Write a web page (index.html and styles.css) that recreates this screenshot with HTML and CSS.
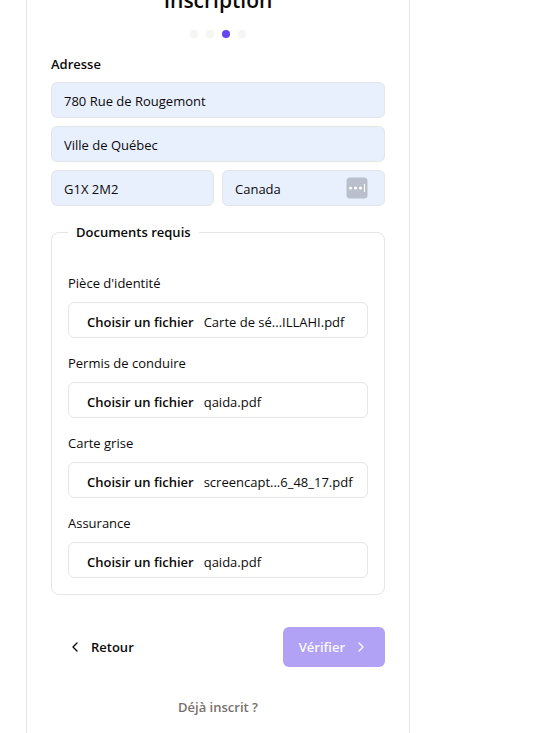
FILE: index.html
```html
<!DOCTYPE html>
<html lang="fr">
<head>
<meta charset="utf-8">
<meta name="viewport" content="width=device-width, initial-scale=1">
<title>Inscription</title>
<link rel="stylesheet" href="styles.css">
</head>
<body>
<main class="card">
  <h1 class="title">Inscription</h1>
  <ol class="steps">
    <li class="step"></li>
    <li class="step"></li>
    <li class="step step-current"></li>
    <li class="step"></li>
  </ol>
  <form class="form">
    <div class="address">
      <label class="label label-strong" for="street">Adresse</label>
      <input class="input" id="street" type="text" value="780 Rue de Rougemont">
      <input class="input" type="text" aria-label="Ville" value="Ville de Québec">
      <div class="row">
        <input class="input" type="text" aria-label="Code postal" value="G1X 2M2">
        <div class="with-badge">
          <input class="input" type="text" aria-label="Pays" value="Canada">
          <svg class="badge" viewBox="0 0 22 22" aria-hidden="true">
            <rect x="0.5" y="0.5" width="21" height="21" rx="3.5" fill="#b9c0cb"/>
            <circle cx="4.5" cy="11" r="1.5" fill="#fff"/>
            <circle cx="9.5" cy="11" r="1.5" fill="#fff"/>
            <circle cx="14.5" cy="11" r="1.5" fill="#fff"/>
            <rect x="18" y="7" width="1" height="8" fill="#fff"/>
          </svg>
        </div>
      </div>
    </div>
    <fieldset class="documents">
      <legend class="legend">Documents requis</legend>
      <div class="field">
        <label class="label" for="identity">Pièce d'identité</label>
        <label class="file"><input class="file-input" id="identity" type="file"><span class="file-button">Choisir un fichier</span><span class="file-name">Carte de sé...ILLAHI.pdf</span></label>
      </div>
      <div class="field">
        <label class="label" for="licence">Permis de conduire</label>
        <label class="file"><input class="file-input" id="licence" type="file"><span class="file-button">Choisir un fichier</span><span class="file-name">qaida.pdf</span></label>
      </div>
      <div class="field">
        <label class="label" for="registration">Carte grise</label>
        <label class="file"><input class="file-input" id="registration" type="file"><span class="file-button">Choisir un fichier</span><span class="file-name">screencapt...6_48_17.pdf</span></label>
      </div>
      <div class="field">
        <label class="label" for="insurance">Assurance</label>
        <label class="file"><input class="file-input" id="insurance" type="file"><span class="file-button">Choisir un fichier</span><span class="file-name">qaida.pdf</span></label>
      </div>
    </fieldset>
    <div class="actions">
      <button class="button button-ghost" type="button"><svg class="icon" viewBox="0 0 24 24" aria-hidden="true"><path d="m15 18-6-6 6-6"/></svg>Retour</button>
      <button class="button button-primary" type="submit" disabled>Vérifier<svg class="icon" viewBox="0 0 24 24" aria-hidden="true"><path d="m9 18 6-6-6-6"/></svg></button>
    </div>
  </form>
  <a class="login" href="#">Déjà inscrit ?</a>
</main>
</body>
</html>
```
FILE: styles.css
```css
*, *::before, *::after { box-sizing: border-box; }

body {
  margin: 0;
  background: #fff;
  color: #0c0a09;
  font-family: "Segoe UI", "Open Sans", "Noto Sans", sans-serif;
  font-size: 13px;
  line-height: 20px;
}

.card {
  display: flex;
  flex-direction: column;
  max-width: 384px;
  min-height: calc(100vh + 16px);
  margin: -16px 26px 0;
  padding: 0 24px 16px;
  border: solid #e5e5e5;
  border-width: 0 1px;
}

.title {
  margin: 0;
  font-size: 21px;
  font-weight: 600;
  line-height: 32px;
  text-align: center;
}

.steps {
  display: flex;
  justify-content: center;
  gap: 8px;
  margin: 14px 0 16px;
  padding: 0;
  list-style: none;
}

.step {
  width: 8px;
  height: 8px;
  border-radius: 50%;
  background: #f5f5f4;
}

.step-current { background: #6645ee; }

.address {
  display: flex;
  flex-direction: column;
  gap: 8px;
}

.row {
  display: grid;
  grid-template-columns: 1fr 1fr;
  gap: 8px;
}

.label-strong, .legend, .file-button, .button, .login { font-weight: 600; }

.input {
  width: 100%;
  height: 36px;
  padding: 2px 12px 0;
  border: 1px solid #e5e5e5;
  border-radius: 6px;
  background: #e8f0fe;
  color: inherit;
  font: inherit;
}

.with-badge { position: relative; }

.badge {
  position: absolute;
  top: 7px;
  right: 17px;
  width: 22px;
  height: 22px;
}

.documents {
  display: flex;
  flex-direction: column;
  gap: 15px;
  min-width: 0;
  margin: 16px 0 32px;
  padding: 31px 16px 16px;
  border: 1px solid #e5e5e5;
  border-radius: 8px;
}

.legend { padding: 0 8px; }

.field {
  display: flex;
  flex-direction: column;
  gap: 9px;
}

.file {
  display: flex;
  align-items: center;
  gap: 10px;
  height: 36px;
  padding: 4px 0 0 18px;
  border: 1px solid #e5e5e5;
  border-radius: 6px;
  white-space: nowrap;
  cursor: pointer;
}

.file-input {
  position: absolute;
  width: 1px;
  height: 1px;
  opacity: 0;
}

.actions {
  display: flex;
  justify-content: space-between;
}

.button {
  display: flex;
  align-items: center;
  gap: 8px;
  height: 40px;
  padding: 0 16px;
  border: 0;
  border-radius: 6px;
  background: none;
  color: inherit;
  font-family: inherit;
  font-size: 13px;
  line-height: 20px;
}

.button-primary {
  background: #b2a2f6;
  color: #fafafa;
}

.icon {
  width: 16px;
  height: 16px;
  fill: none;
  stroke: currentColor;
  stroke-width: 2;
  stroke-linecap: round;
  stroke-linejoin: round;
}

.login {
  align-self: center;
  margin-top: 30px;
  color: #78716c;
  text-decoration: none;
}
```
